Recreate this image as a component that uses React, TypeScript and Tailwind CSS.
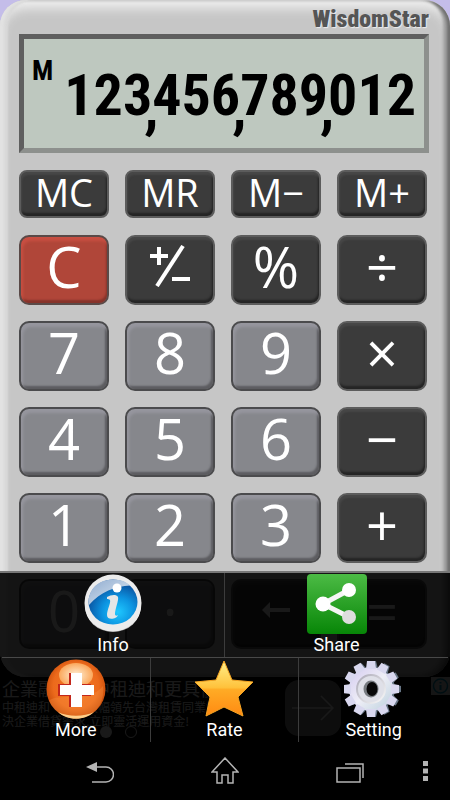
import { clsx } from "clsx";

type KeyTone = "dark" | "gray" | "red";

interface CalcKey {
  label: string;
  name?: string;
  tone: KeyTone;
}

const MEMORY_KEYS = ["MC", "MR", "M−", "M+"];
const OPERATORS = ["÷", "×", "−", "+", "="];

const KEYS: CalcKey[] = [
  { label: "C", tone: "red" },
  { label: "±", name: "Change sign", tone: "dark" },
  { label: "%", tone: "dark" },
  { label: "÷", tone: "dark" },
  { label: "7", tone: "gray" },
  { label: "8", tone: "gray" },
  { label: "9", tone: "gray" },
  { label: "×", tone: "dark" },
  { label: "4", tone: "gray" },
  { label: "5", tone: "gray" },
  { label: "6", tone: "gray" },
  { label: "−", tone: "dark" },
  { label: "1", tone: "gray" },
  { label: "2", tone: "gray" },
  { label: "3", tone: "gray" },
  { label: "+", tone: "dark" },
  { label: "0", tone: "gray" },
  { label: "·", name: "Decimal point", tone: "gray" },
  { label: "←", name: "Backspace", tone: "dark" },
  { label: "=", tone: "dark" },
];

const TONES: Record<KeyTone, string> = {
  dark: "border-[#5c5c5c] bg-[#3b3b3b] shadow-[inset_1px_3px_2px_#474747,inset_-1px_-3px_2px_#242424]",
  gray: "border-[#4b4b4d] bg-[#86878c] shadow-[inset_2px_4px_3px_#96969e,inset_-2px_-3px_2px_#5c5c60]",
  red: "border-[#5a4a48] bg-[#b04639] shadow-[inset_2px_4px_3px_#c94f42,inset_-1px_-3px_2px_#86332a]",
};

export default function App() {
  return (
    <main className="flex min-h-screen flex-col bg-black font-['Roboto',sans-serif]">
      <div className="relative flex grow flex-col bg-[linear-gradient(#c4bde9_40px,#000_40px)]">
        <Calculator />
        <AdBanner />
        <OptionsMenu />
      </div>
      <SystemBar />
    </main>
  );
}

function Calculator() {
  return (
    <section className="rounded-[26px] bg-[#c6c6c6] pr-[21px] pb-7 pl-[19px] shadow-[inset_4px_0_3px_#e2e2e2,inset_8px_0_2px_#d8d8d8,inset_-3px_0_3px_#6e6e6e,inset_-7px_-2px_3px_#a2a2a2,inset_0_8px_12px_#f0f0f0]">
      <h1 className="h-[34px] pt-1 text-right font-['Roboto_Condensed','Liberation_Sans',sans-serif] text-[24px] leading-[30px] font-black text-[#555555] [text-shadow:1px_1px_1px_#ededed]">
        WisdomStar
      </h1>
      <Display value="123,456,789,012" />
      <div className="mt-[17px] grid grid-cols-4 gap-x-4 pr-[2px]">
        {MEMORY_KEYS.map((label) => (
          <button
            key={label}
            type="button"
            className={clsx(
              "flex h-12 items-center justify-center rounded-lg border-2 pb-1 font-['Open_Sans',sans-serif] text-[38px] leading-none text-white",
              TONES.dark,
            )}
          >
            {label}
          </button>
        ))}
      </div>
      <div className="mt-[17px] grid grid-cols-4 gap-4 pr-[2px]">
        {KEYS.map((key) => (
          <button
            key={key.label}
            type="button"
            aria-label={key.name}
            className={clsx(
              "flex h-[70px] items-center justify-center rounded-[10px] border-2 pb-2 font-['Open_Sans','DejaVu_Sans',sans-serif] text-[56px] leading-none text-white",
              OPERATORS.includes(key.label) && "font-medium",
              TONES[key.tone],
            )}
          >
            <KeyFace label={key.label} />
          </button>
        ))}
      </div>
    </section>
  );
}

function KeyFace({ label }: { label: string }) {
  if (label === "±") {
    return (
      <svg viewBox="0 0 42 42" className="h-[42px] w-[42px]" fill="none" stroke="currentColor" strokeWidth="4">
        <path d="M1 11h18M10 2v18M23 34h18" />
        <path d="M8 41 34 1" />
      </svg>
    );
  }
  if (label === "←") {
    return (
      <svg viewBox="0 0 28 16" className="h-4 w-7">
        <path d="M0 8 8 0v6h20v4H8v6Z" fill="currentColor" />
      </svg>
    );
  }
  return <>{label}</>;
}

function Display({ value }: { value: string }) {
  return (
    <output className="flex h-[119px] justify-between border-[5px] border-t-[#5f5f5f] border-r-[#8d908d] border-b-[#8d908d] border-l-[#5f5f5f] bg-[#bec8bf] pr-2 pl-2 font-['Roboto_Condensed','Liberation_Sans',sans-serif] font-bold text-black">
      <span className="pt-3 text-[28px] leading-10">M</span>
      <span className="pt-4 text-[58px] leading-[80px] whitespace-nowrap">
        {value.split("").map((char, i) => (
          // separators take no room of their own, they hang below and between two digits
          <span key={i} className={char === "," ? "inline-block w-0 align-[-12px] -indent-2 leading-none" : undefined}>
            {char}
          </span>
        ))}
      </span>
    </output>
  );
}

function AdBanner() {
  return (
    <a href="#ad" className="flex h-[65px] justify-between font-['Noto_Sans_CJK_TC',sans-serif] text-white">
      <div className="min-w-0 grow pl-[2px] whitespace-nowrap">
        <p className="text-[18px] leading-[23px]">企業融資？中租迪和更具優勢</p>
        <p className="text-[12px] leading-[14px]">中租迪和，以超大幅領先台灣租賃同業解</p>
        <p className="text-[12px] leading-[14px]">決企業借貸需求,立即靈活運用資金!</p>
        <div className="-mt-[2px] flex gap-[13px] pl-[98px]">
          <span className="size-3 rounded-full bg-white" />
          <span className="size-3 rounded-full border border-white" />
        </div>
      </div>
      <span className="mt-[3px] mr-[90px] flex size-14 shrink-0 items-center justify-center rounded-[14px] bg-[#888888]">
        <svg viewBox="0 0 42 26" className="h-[26px] w-[42px]" fill="none" stroke="#ffffff" strokeWidth="1.5">
          <path d="M0 13h41M29 1l12 12-12 12" />
        </svg>
      </span>
      <svg viewBox="0 0 19 18" className="h-[18px] w-[19px] shrink-0">
        <path d="M0 0h19v18H0Z" fill="#d8d8d8" />
        <circle cx="9.500" cy="9" r="7" fill="none" stroke="#0088aa" strokeWidth="1.500" />
        <path d="M9.500 8v5M9.500 5v1.500" stroke="#0088aa" strokeWidth="2" />
      </svg>
    </a>
  );
}

function OptionsMenu() {
  return (
    <nav aria-label="Options" className="absolute inset-x-0 bottom-0 border-t-2 border-[#777777] bg-black/90 bg-clip-padding px-[2px]">
      <div className="grid grid-cols-2 divide-x divide-[#3c3c3c] border-b border-[#484848]">
        <MenuItem label="Info" icon={<InfoIcon />} />
        <MenuItem label="Share" icon={<ShareIcon />} />
      </div>
      <div className="grid grid-cols-3 divide-x divide-[#3c3c3c]">
        <MenuItem label="More" icon={<MoreIcon />} />
        <MenuItem label="Rate" icon={<StarIcon />} />
        <MenuItem label="Setting" icon={<GearIcon />} />
      </div>
    </nav>
  );
}

function MenuItem({ label, icon }: { label: string; icon: React.ReactNode }) {
  return (
    <button type="button" className="flex h-[84px] flex-col items-center pt-px text-[18px] leading-[22px] text-white">
      {icon}
      <span>{label}</span>
    </button>
  );
}

function InfoIcon() {
  return (
    <svg viewBox="0 0 60 60" className="size-[60px]">
      <defs>
        <radialGradient id="info-blue" cx="60%" cy="72%" r="65%">
          <stop offset="0" stopColor="#1fc8ff" />
          <stop offset="0.500" stopColor="#0c93e0" />
          <stop offset="1" stopColor="#0a4f9c" />
        </radialGradient>
        <linearGradient id="info-rim" x1="0" y1="0" x2="0" y2="1">
          <stop offset="0" stopColor="#ffffff" />
          <stop offset="0.750" stopColor="#f2f2f2" />
          <stop offset="1" stopColor="#8e8e8e" />
        </linearGradient>
        <linearGradient id="info-shine" x1="0" y1="0" x2="1" y2="1">
          <stop offset="0" stopColor="#8fabcf" />
          <stop offset="1" stopColor="#e3edf5" />
        </linearGradient>
      </defs>
      <ellipse cx="30" cy="32" rx="28" ry="26" fill="url(#info-rim)" />
      <circle cx="30" cy="29" r="28.500" fill="#ececec" />
      <ellipse cx="30" cy="28" rx="24.500" ry="22.500" fill="url(#info-blue)" />
      <path d="M5.500 28C6 14 16 5.500 30 5.500c8 0 13 2 17 6C33 12 17 18 6 31Z" fill="url(#info-shine)" />
      <circle cx="34" cy="14" r="4.500" fill="#ffffff" />
      <path d="M24 23c4-2 9-3 11 0 1 3-3 12-3 17 0 2 2 2 3 1-1 4-11 6-11 0 0-5 4-12 3-15-1-1-2-1-3-1Z" fill="#e6e6e6" />
    </svg>
  );
}

function ShareIcon() {
  return (
    <svg viewBox="0 0 60 60" className="size-[60px]">
      <defs>
        <linearGradient id="share-green" x1="0" y1="0" x2="0" y2="1">
          <stop offset="0" stopColor="#4cbb45" />
          <stop offset="1" stopColor="#078607" />
        </linearGradient>
      </defs>
      <rect width="60" height="60" rx="4" fill="url(#share-green)" />
      <path d="M42 16 16 30l26 13" fill="none" stroke="#f5f5f5" strokeWidth="5" />
      <circle cx="16" cy="30" r="7.500" fill="#ffffff" />
      <circle cx="42" cy="16" r="7" fill="#ffffff" />
      <circle cx="42" cy="43" r="7" fill="#dddddd" />
    </svg>
  );
}

function MoreIcon() {
  return (
    <svg viewBox="0 0 60 60" className="size-[60px]">
      <defs>
        <radialGradient id="more-orange" cx="50%" cy="45%" r="55%">
          <stop offset="0" stopColor="#f47a2a" />
          <stop offset="0.700" stopColor="#ec6a1c" />
          <stop offset="1" stopColor="#c44908" />
        </radialGradient>
        <radialGradient id="more-shine">
          <stop offset="0" stopColor="#fff0d6" />
          <stop offset="1" stopColor="#fba85c" />
        </radialGradient>
      </defs>
      <circle cx="30" cy="30" r="29.500" fill="url(#more-orange)" />
      <path d="M3 42c8-9 40 3 54-15 2 20-10 32-27 32C18 59 8 53 3 42Z" fill="#fb9a48" opacity="0.300" />
      <path d="M12 53c10 5 26 5 36 0-9 9-27 9-36 0Z" fill="#ffd08a" />
      <ellipse cx="30" cy="16" rx="17" ry="12" fill="url(#more-shine)" />
      <path d="M23 14h10v11h12v12H33v11H23V37H12V25h11Z" fill="#c3261a" />
      <path d="M25 14h11v12h12v10H36v12H25V36H14V26h11Z" fill="#ffffff" />
    </svg>
  );
}

function StarIcon() {
  return (
    <svg viewBox="0 0 60 60" className="size-[60px]">
      <defs>
        <linearGradient id="star-gold" x1="0" y1="0" x2="0" y2="1">
          <stop offset="0" stopColor="#fff08a" />
          <stop offset="0.480" stopColor="#ffc23c" />
          <stop offset="0.520" stopColor="#ffab25" />
          <stop offset="1" stopColor="#ff8a12" />
        </linearGradient>
      </defs>
      <path
        d="m30 2 8 19 21 2-15 15 5 19-19-9-18 9 4-19L1 23l21-2Z"
        fill="url(#star-gold)"
        stroke="#f6a422"
        strokeLinejoin="round"
      />
    </svg>
  );
}

const GEAR_TEETH = Array.from({ length: 12 }, (_, i) => i * 30);

function GearIcon() {
  return (
    <svg viewBox="0 0 60 60" className="size-[60px]">
      <defs>
        <linearGradient id="gear-metal" x1="0" y1="0" x2="1" y2="1">
          <stop offset="0" stopColor="#d3caf0" />
          <stop offset="0.500" stopColor="#eeeef6" />
          <stop offset="1" stopColor="#b9cfdc" />
        </linearGradient>
        <linearGradient id="gear-ring" x1="0" y1="0" x2="1" y2="1">
          <stop offset="0" stopColor="#aaa8b6" />
          <stop offset="1" stopColor="#fafafa" />
        </linearGradient>
      </defs>
      <g transform="translate(2 0)" fill="#687686">
        <circle cx="27" cy="30" r="22" />
        {GEAR_TEETH.map((angle) => (
          <path key={angle} d="M22 10 24 2h6l2 8Z" transform={`rotate(${angle} 27 30)`} />
        ))}
      </g>
      <g fill="url(#gear-metal)">
        <circle cx="27" cy="30" r="22" />
        {GEAR_TEETH.map((angle) => (
          <path key={angle} d="M22 10 23 2h8l1 8Z" fill="#d9d8ef" transform={`rotate(${angle} 27 30)`} />
        ))}
      </g>
      <circle cx="27" cy="30" r="14" fill="#dfe0e8" stroke="url(#gear-ring)" strokeWidth="2" />
      <ellipse cx="27" cy="30" rx="7.500" ry="8.500" fill="#777b80" />
      <ellipse cx="28" cy="30" rx="5.500" ry="7" fill="#080808" />
    </svg>
  );
}

function SystemBar() {
  return (
    <nav aria-label="System" className="grid h-[58px] grid-cols-[114fr_125fr_125fr_86fr] text-[#b4b4b4]">
      <button type="button" aria-label="Back" className="flex items-center justify-end pt-1">
        <svg viewBox="0 0 28 22" className="h-[22px] w-7" fill="none" stroke="currentColor" strokeWidth="1.5">
          <path d="M6 20h14a7 7 0 0 0 0-15H10" />
          <path d="M0 5 11 0v10Z" fill="currentColor" stroke="none" />
        </svg>
      </button>
      <button type="button" aria-label="Home" className="flex items-center justify-end">
        <svg viewBox="0 0 28 28" className="h-7 w-7" fill="none" stroke="currentColor" strokeWidth="1.5">
          <path d="M14 1 1 15h5v11h5v-8h6v8h5V15h5Z" />
        </svg>
      </button>
      <button type="button" aria-label="Recent apps" className="flex items-center justify-end pt-1">
        <svg viewBox="0 0 28 20" className="h-5 w-7" fill="none" stroke="currentColor" strokeWidth="1.5">
          <path d="M1 5h23v14H1ZM9 1h18v14" />
        </svg>
      </button>
      <button type="button" aria-label="Menu" className="flex items-center justify-end pr-[22px]">
        <svg viewBox="0 0 5 20" className="h-5 w-[5px]" fill="currentColor">
          <path d="M0 0h5v5H0ZM0 7.500h5v5H0ZM0 15h5v5H0Z" />
        </svg>
      </button>
    </nav>
  );
}
